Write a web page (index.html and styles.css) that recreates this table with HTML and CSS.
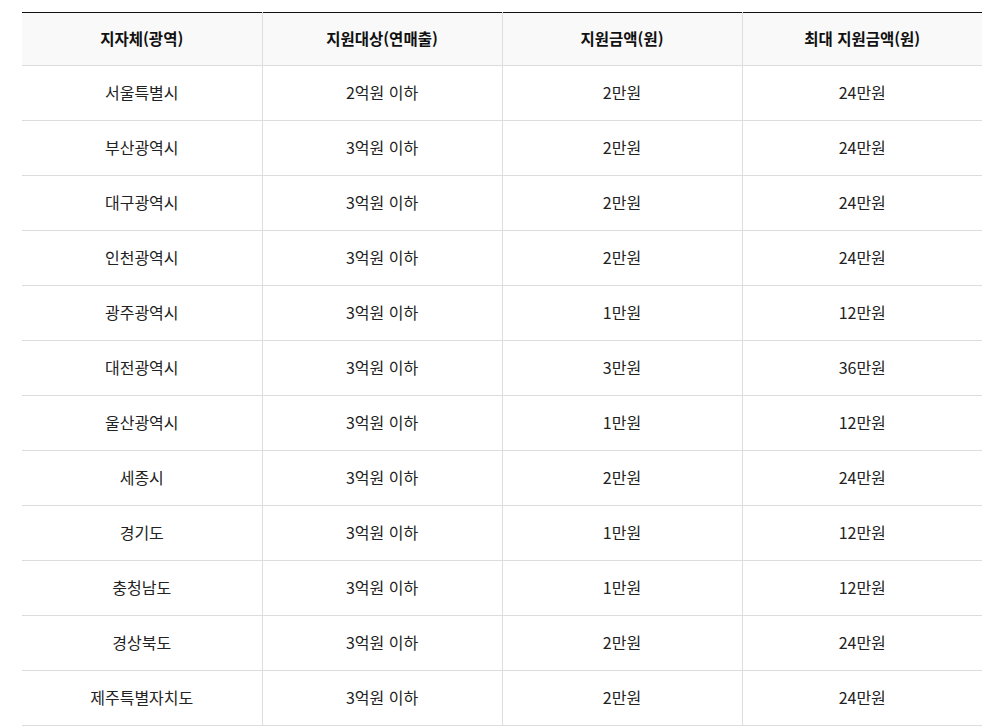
FILE: index.html
```html
<!DOCTYPE html>
<html lang="ko">
<head>
<meta charset="utf-8">
<link rel="stylesheet" href="styles.css">
</head>
<body>
<div class="wrap">
<table class="support">
<thead>
<tr><th>지자체(광역)</th><th>지원대상(연매출)</th><th>지원금액(원)</th><th>최대 지원금액(원)</th></tr>
</thead>
<tbody>
<tr><td>서울특별시</td><td>2억원 이하</td><td>2만원</td><td>24만원</td></tr>
<tr><td>부산광역시</td><td>3억원 이하</td><td>2만원</td><td>24만원</td></tr>
<tr><td>대구광역시</td><td>3억원 이하</td><td>2만원</td><td>24만원</td></tr>
<tr><td>인천광역시</td><td>3억원 이하</td><td>2만원</td><td>24만원</td></tr>
<tr><td>광주광역시</td><td>3억원 이하</td><td>1만원</td><td>12만원</td></tr>
<tr><td>대전광역시</td><td>3억원 이하</td><td>3만원</td><td>36만원</td></tr>
<tr><td>울산광역시</td><td>3억원 이하</td><td>1만원</td><td>12만원</td></tr>
<tr><td>세종시</td><td>3억원 이하</td><td>2만원</td><td>24만원</td></tr>
<tr><td>경기도</td><td>3억원 이하</td><td>1만원</td><td>12만원</td></tr>
<tr><td>충청남도</td><td>3억원 이하</td><td>1만원</td><td>12만원</td></tr>
<tr><td>경상북도</td><td>3억원 이하</td><td>2만원</td><td>24만원</td></tr>
<tr><td>제주특별자치도</td><td>3억원 이하</td><td>2만원</td><td>24만원</td></tr>
</tbody>
</table>
</div>
</body>
</html>
```
FILE: styles.css
```css
html, body {
  margin: 0;
  padding: 0;
  background: #fff;
}
body {
  font-family: "Noto Sans CJK KR", "Noto Sans", sans-serif;
  color: #222;
}
.wrap {
  padding: 12px 9px 0 22px;
}
.support {
  width: 960px;
  border-collapse: collapse;
  table-layout: fixed;
  border-top: 1px solid #111;
}
.support th,
.support td {
  text-align: center;
  border-bottom: 1px solid #ddd;
  border-left: 1px solid #ddd;
  padding: 0 0 3px;
  line-height: 20px;
}
.support th:first-child,
.support td:first-child {
  border-left: none;
}
.support th {
  height: 49px;
  font-size: 15.5px;
  background: #f9f9f9;
  font-weight: 700;
  color: #111;
}
.support td {
  height: 51px;
  font-size: 16px;
  font-weight: 400;
}
```
